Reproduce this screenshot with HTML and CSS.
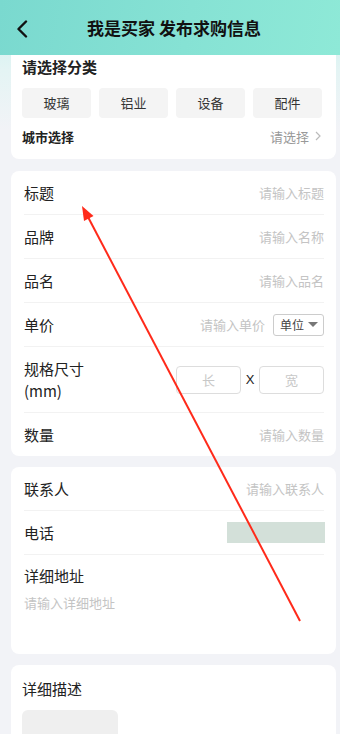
FILE: index.html
```html
<!DOCTYPE html>
<html lang="zh-CN">
<head>
    <meta charset="UTF-8">
    <meta name="viewport" content="width=device-width, initial-scale=1.0">
    <title>我是买家 发布求购信息</title>
    <link rel="stylesheet" href="styles.css">
</head>
<body>
    <div class="header">
        <svg class="back" width="12" height="18" viewBox="0 0 12 18"><path d="M10 1.5 L2.5 9 L10 16.5" fill="none" stroke="#111" stroke-width="2.4" stroke-linecap="round" stroke-linejoin="round"/></svg>
        <h1>我是买家 发布求购信息</h1>
    </div>

    <div class="page">
        <div class="card card-top">
            <div class="section-title">请选择分类</div>
            <div class="chips">
                <span class="chip">玻璃</span>
                <span class="chip">铝业</span>
                <span class="chip">设备</span>
                <span class="chip">配件</span>
            </div>
            <div class="city">
                <span class="city-label">城市选择</span>
                <span class="city-value">请选择 <svg width="6" height="10" viewBox="0 0 6 10"><path d="M1 1 L5 5 L1 9" fill="none" stroke="#bbb" stroke-width="1.2"/></svg></span>
            </div>
        </div>

        <div class="card form">
            <div class="row"><span class="label">标题</span><span class="ph">请输入标题</span></div>
            <div class="row"><span class="label">品牌</span><span class="ph">请输入名称</span></div>
            <div class="row"><span class="label">品名</span><span class="ph">请输入品名</span></div>
            <div class="row">
                <span class="label">单价</span>
                <span class="right">
                    <span class="ph">请输入单价</span>
                    <span class="unit">单位 <i class="tri"></i></span>
                </span>
            </div>
            <div class="row row-tall">
                <span class="label">规格尺寸<br>(mm)</span>
                <span class="right">
                    <span class="box">长</span>
                    <span class="times">X</span>
                    <span class="box">宽</span>
                </span>
            </div>
            <div class="row"><span class="label">数量</span><span class="ph">请输入数量</span></div>
        </div>

        <div class="card form">
            <div class="row"><span class="label">联系人</span><span class="ph">请输入联系人</span></div>
            <div class="row"><span class="label">电话</span><span class="masked"></span></div>
            <div class="address">
                <div class="label">详细地址</div>
                <div class="ph">请输入详细地址</div>
            </div>
        </div>

        <div class="card desc">
            <div class="label">详细描述</div>
            <div class="upload"></div>
        </div>
    </div>

    <svg class="arrow" width="340" height="734" viewBox="0 0 340 734">
        <line x1="300" y1="621" x2="88" y2="217" stroke="#ff2a1a" stroke-width="2"/>
        <polygon points="82,206 93.5,216 84,221" fill="#ff2a1a"/>
    </svg>
</body>
</html>
```

FILE: styles.css
```css
body {
    margin: 0;
    font-family: "Noto Sans CJK SC", "Noto Sans", sans-serif;
    background: linear-gradient(180deg, #c6f2ed 0, #e4f4f4 70px, #f2f3f7 130px);
    color: #222;
    height: 734px;
    overflow: hidden;
    position: relative;
}
.header {
    position: relative;
    z-index: 1;
    height: 55px;
    display: flex;
    align-items: center;
    justify-content: center;
    background: linear-gradient(100deg, #7ad9cf 0%, #86e2d4 55%, #8ee9d7 100%);
}
.back {
    position: absolute;
    left: 16px;
    top: 20px;
}
.header h1 {
    margin: 0 0 0 8px;
    font-size: 17px;
    font-weight: 700;
    color: #111;
}
.page {
    padding: 0 4px 0 11px;
}
.card {
    background: #fff;
    border-radius: 8px;
    margin-bottom: 11px;
}
.card-top {
    margin-top: -10px;
    margin-bottom: 12px;
    border-radius: 0 0 8px 8px;
    padding: 11px 14px 5px 11px;
}
.section-title {
    font-size: 15px;
    font-weight: 700;
    line-height: 22px;
}
.chips {
    display: flex;
    gap: 8px;
    margin-top: 10px;
}
.chip {
    width: 69px;
    height: 30px;
    line-height: 30px;
    text-align: center;
    background: #f4f4f4;
    border-radius: 4px;
    font-size: 13px;
    color: #333;
}
.city {
    display: flex;
    justify-content: space-between;
    align-items: center;
    height: 36px;
    padding-right: 1px;
}
.city-label {
    font-size: 13px;
    font-weight: 700;
}
.city-value {
    font-size: 13px;
    color: #999;
    display: flex;
    align-items: center;
    gap: 6px;
}
.form {
    padding: 0 12px 0 13px;
}
.row {
    display: flex;
    justify-content: space-between;
    align-items: center;
    height: 43px;
    border-bottom: 1px solid #f2f2f2;
}
.row:last-child {
    border-bottom: none;
}
.row-tall {
    height: 65px;
}
.label {
    font-size: 15px;
    line-height: 22px;
    color: #222;
}
.ph {
    font-size: 13px;
    color: #c4c4c4;
}
.right {
    display: flex;
    align-items: center;
}
.unit {
    margin-left: 8px;
    width: 51px;
    height: 22px;
    box-sizing: border-box;
    border: 1px solid #ccc;
    border-radius: 3px;
    font-size: 12px;
    color: #444;
    display: flex;
    align-items: center;
    justify-content: space-between;
    padding: 0 5px 0 6px;
}
.tri {
    width: 0;
    height: 0;
    border-left: 5px solid transparent;
    border-right: 5px solid transparent;
    border-top: 5px solid #777;
}
.box {
    width: 65px;
    height: 28px;
    box-sizing: border-box;
    border: 1px solid #ddd;
    border-radius: 4px;
    display: flex;
    align-items: center;
    justify-content: center;
    font-size: 13px;
    color: #c8c8c8;
}
.times {
    width: 18px;
    text-align: center;
    font-size: 13px;
    color: #222;
    font-family: "Liberation Sans", sans-serif;
}
.masked {
    width: 98px;
    height: 21px;
    margin-right: -1px;
    background: #d3e0d9;
}
.address {
    height: 99px;
    padding-top: 10px;
    box-sizing: border-box;
}
.address .ph {
    margin-top: 6px;
}
.desc {
    padding: 13px 11px 0;
    height: 80px;
}
.upload {
    margin-top: 10px;
    width: 96px;
    height: 40px;
    background: #efefef;
    border-radius: 6px;
}
.arrow {
    position: absolute;
    left: 0;
    top: 0;
    z-index: 2;
    pointer-events: none;
}
```
